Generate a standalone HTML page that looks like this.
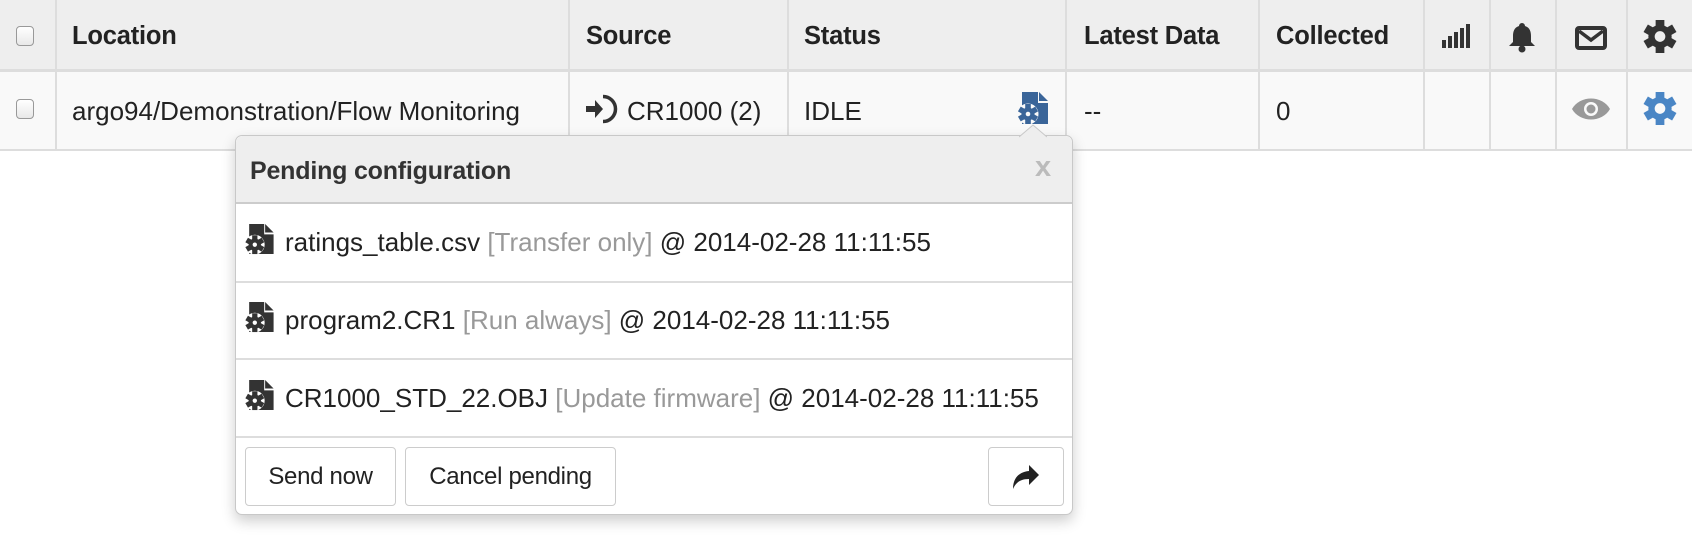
<!DOCTYPE html>
<html><head><meta charset="utf-8"><style>
*{box-sizing:border-box;margin:0;padding:0}
body{width:1692px;height:544px;background:#fff;font-family:"Liberation Sans",Arial,sans-serif;color:#222;position:relative;overflow:hidden}
.abs{position:absolute}
.hdr{left:0;top:0;width:1692px;height:72px;background:#eeeeee;border-bottom:3px solid #ddd}
.row{left:0;top:72px;width:1692px;height:79px;background:#f9f9f9;border-bottom:2px solid #ddd}
.vl{position:absolute;top:0;width:2px;height:151px;background:#dddddd}
.th{position:absolute;top:22px;font-size:25.5px;font-weight:bold;color:#222;letter-spacing:-0.2px}
.td{position:absolute;top:96px;font-size:26px;color:#222;letter-spacing:0px}
.cb{position:absolute;width:18px;height:20px;border:1px solid #999;border-radius:4px;background:linear-gradient(#fff,#e8e8e8)}
.pop{left:235px;top:135px;width:838px;height:380px;background:#fff;border:1px solid #c8c8c8;border-radius:7px;box-shadow:0 6px 14px rgba(0,0,0,.2)}
.ph{position:absolute;left:0;top:0;width:836px;height:68px;background:#eeeeee;border-bottom:2px solid #ccc;border-radius:7px 7px 0 0}
.item{position:absolute;left:0;width:836px;font-size:26px;color:#222;letter-spacing:0px}
.sep{position:absolute;left:0;width:836px;height:2px;background:#ddd}
.g{color:#999}
.btn{position:absolute;top:311px;height:59px;border:1px solid #ccc;border-radius:4px;background:#fff;font-size:24px;color:#222;text-align:center;line-height:57px;letter-spacing:-0.3px}
</style></head><body>
<div class="abs hdr"></div>
<div class="abs row"></div>
<div class="vl" style="left:55px"></div>
<div class="vl" style="left:568px"></div>
<div class="vl" style="left:787px"></div>
<div class="vl" style="left:1065px"></div>
<div class="vl" style="left:1258px"></div>
<div class="vl" style="left:1423px"></div>
<div class="vl" style="left:1489px"></div>
<div class="vl" style="left:1555px"></div>
<div class="vl" style="left:1626px"></div>

<div class="cb" style="left:16px;top:26px"></div>
<div class="cb" style="left:16px;top:99px"></div>

<div class="th" style="left:72px">Location</div>
<div class="th" style="left:586px">Source</div>
<div class="th" style="left:804px">Status</div>
<div class="th" style="left:1084px">Latest Data</div>
<div class="th" style="left:1276px">Collected</div>

<svg class="abs" style="left:1442px;top:24px" width="28" height="24" viewBox="0 0 28 24" fill="#333"><rect x="0" y="16" width="4" height="8"/><rect x="6" y="12" width="4" height="12"/><rect x="12" y="8" width="4" height="16"/><rect x="18" y="4" width="4" height="20"/><rect x="24" y="0" width="4" height="24"/></svg>
<svg class="abs" style="left:1507px;top:23px" width="30" height="30" viewBox="0 0 30 30" fill="#333"><path d="M15 0a3 3 0 0 1 3 3c5 1.5 6 6 6 10v6l4 4H2l4-4v-6c0-4 1-8.5 6-10a3 3 0 0 1 3-3z"/><circle cx="15" cy="26" r="3.5"/></svg>
<svg class="abs" style="left:1575px;top:26px" width="32" height="24" viewBox="0 0 32 24"><rect x="2" y="2" width="28" height="20" rx="2" fill="none" stroke="#333" stroke-width="4"/><path d="M4 5l12 9 12-9" fill="none" stroke="#333" stroke-width="3.5"/></svg>
<svg class="abs" style="left:1643px;top:20px" width="34" height="33" viewBox="-17 -17 34 34"><g fill="#333"><circle r="12"/><rect x="-4.5" y="-17" width="9" height="34"/><rect x="-4.5" y="-17" width="9" height="34" transform="rotate(60)"/><rect x="-4.5" y="-17" width="9" height="34" transform="rotate(120)"/></g><circle r="5.5" fill="#eee"/></svg>

<div class="td" style="left:72px">argo94/Demonstration/Flow Monitoring</div>
<svg class="abs" style="left:585px;top:94px" width="34" height="30" viewBox="0 0 34 30"><path d="M1 12h9V6l8 9-8 9v-6H1z" fill="#333"/><path d="M18 2.5a12.5 12.5 0 0 1 0 25" fill="none" stroke="#333" stroke-width="3.5"/></svg>
<div class="td" style="left:627px">CR1000 (2)</div>
<div class="td" style="left:804px">IDLE</div>
<svg class="abs" style="left:1017px;top:92px" width="32" height="33" viewBox="0 0 32 33"><path d="M5 0h16v11h10v21H5z" fill="#3a6599"/><path d="M22 0l9 9h-9z" fill="#3a6599"/><g transform="translate(11,22)"><circle r="10.5" fill="#f9f9f9"/><g fill="#3a6599"><circle r="6.5"/><rect x="-2.8" y="-10" width="5.6" height="20"/><rect x="-2.8" y="-10" width="5.6" height="20" transform="rotate(60)"/><rect x="-2.8" y="-10" width="5.6" height="20" transform="rotate(120)"/></g><circle r="2.3" fill="#f9f9f9"/></g></svg>
<div class="td" style="left:1084px">--</div>
<div class="td" style="left:1276px">0</div>
<svg class="abs" style="left:1572px;top:98px" width="38" height="22" viewBox="0 0 38 22"><path d="M0 11C8 -3 30 -3 38 11C30 25 8 25 0 11z" fill="#999"/><circle cx="19" cy="11" r="7" fill="#f9f9f9"/><circle cx="19" cy="11" r="4.5" fill="#999"/></svg>
<svg class="abs" style="left:1643px;top:92px" width="34" height="33" viewBox="-17 -17 34 34"><g fill="#4a86c5"><circle r="12"/><rect x="-4.5" y="-17" width="9" height="34"/><rect x="-4.5" y="-17" width="9" height="34" transform="rotate(60)"/><rect x="-4.5" y="-17" width="9" height="34" transform="rotate(120)"/></g><circle r="5.5" fill="#f9f9f9"/></svg>

<div class="abs pop">
 <div class="ph"></div>
 <div style="position:absolute;left:14px;top:21px;font-size:25px;font-weight:bold;color:#333;letter-spacing:-0.2px">Pending configuration</div>
 <div style="position:absolute;left:799px;top:15px;font-size:29px;font-weight:bold;color:#bbb">x</div>
 <div class="item" style="top:91px"><span style="margin-left:49px">ratings_table.csv <span class="g">[Transfer only]</span> @ 2014-02-28 11:11:55</span></div>
 <div class="sep" style="top:145px"></div>
 <div class="item" style="top:169px"><span style="margin-left:49px">program2.CR1 <span class="g">[Run always]</span> @ 2014-02-28 11:11:55</span></div>
 <div class="sep" style="top:222px"></div>
 <div class="item" style="top:247px"><span style="margin-left:49px">CR1000_STD_22.OBJ <span class="g">[Update firmware]</span> @ 2014-02-28 11:11:55</span></div>
 <div class="sep" style="top:300px"></div>
 <div class="btn" style="left:9px;width:151px">Send now</div>
 <div class="btn" style="left:169px;width:211px">Cancel pending</div>
 <div class="btn" style="left:752px;width:76px"><svg style="margin-top:17px" width="26" height="24" viewBox="0 0 26 24"><path d="M16 0l10 10-10 10v-6C8 14 3 17 0 24 0 13 6 7 16 6z" fill="#222"/></svg></div>
</div>
<svg class="abs" style="left:1019px;top:124px" width="28" height="14" viewBox="0 0 28 14"><path d="M0 13L14 1 28 13" fill="#eee" stroke="#c8c8c8" stroke-width="1"/></svg>

<svg class="abs" style="left:244px;top:224px" width="31" height="31" viewBox="0 0 32 33"><path d="M5 0h16v11h10v21H5z" fill="#333"/><path d="M22 0l9 9h-9z" fill="#333"/><g transform="translate(11,22)"><circle r="10.5" fill="#fff"/><g fill="#333"><circle r="6.5"/><rect x="-2.8" y="-10" width="5.6" height="20"/><rect x="-2.8" y="-10" width="5.6" height="20" transform="rotate(60)"/><rect x="-2.8" y="-10" width="5.6" height="20" transform="rotate(120)"/></g><circle r="2.3" fill="#fff"/></g></svg>
<svg class="abs" style="left:244px;top:302px" width="31" height="31" viewBox="0 0 32 33"><path d="M5 0h16v11h10v21H5z" fill="#333"/><path d="M22 0l9 9h-9z" fill="#333"/><g transform="translate(11,22)"><circle r="10.5" fill="#fff"/><g fill="#333"><circle r="6.5"/><rect x="-2.8" y="-10" width="5.6" height="20"/><rect x="-2.8" y="-10" width="5.6" height="20" transform="rotate(60)"/><rect x="-2.8" y="-10" width="5.6" height="20" transform="rotate(120)"/></g><circle r="2.3" fill="#fff"/></g></svg>
<svg class="abs" style="left:244px;top:380px" width="31" height="31" viewBox="0 0 32 33"><path d="M5 0h16v11h10v21H5z" fill="#333"/><path d="M22 0l9 9h-9z" fill="#333"/><g transform="translate(11,22)"><circle r="10.5" fill="#fff"/><g fill="#333"><circle r="6.5"/><rect x="-2.8" y="-10" width="5.6" height="20"/><rect x="-2.8" y="-10" width="5.6" height="20" transform="rotate(60)"/><rect x="-2.8" y="-10" width="5.6" height="20" transform="rotate(120)"/></g><circle r="2.3" fill="#fff"/></g></svg>
</body></html>
